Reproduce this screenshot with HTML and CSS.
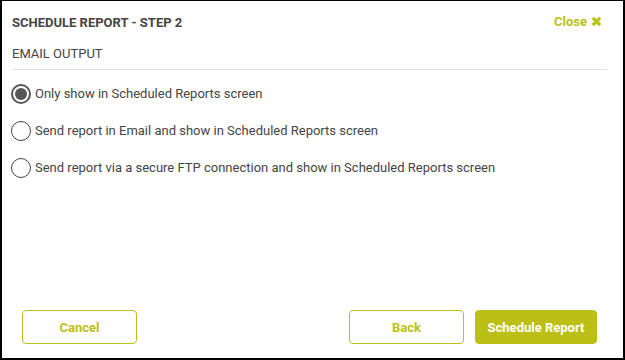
FILE: index.html
```html
<!DOCTYPE html>
<html lang="en">
<head>
<meta charset="UTF-8">
<meta name="viewport" content="width=device-width, initial-scale=1.0">
<title>Schedule Report - Step 2</title>
<link rel="stylesheet" href="styles.css">
</head>
<body>
  <div class="modal">
    <header class="modal-header">
      <h1 class="modal-title">SCHEDULE REPORT - STEP 2</h1>
      <a href="#" class="close-link">Close
        <svg class="close-icon" width="11" height="11" viewBox="0 0 11 11">
          <path d="M1.8 1.8 L9.2 9.2 M9.2 1.8 L1.8 9.2" stroke="currentColor" stroke-width="3.2"/>
        </svg>
      </a>
    </header>

    <div class="section-label">EMAIL OUTPUT</div>
    <div class="divider"></div>

    <ul class="option-list">
      <li class="option">
        <span class="radio checked"></span>
        <span class="option-text">Only show in Scheduled Reports screen</span>
      </li>
      <li class="option">
        <span class="radio"></span>
        <span class="option-text">Send report in Email and show in Scheduled Reports screen</span>
      </li>
      <li class="option">
        <span class="radio"></span>
        <span class="option-text">Send report via a secure FTP connection and show in Scheduled Reports screen</span>
      </li>
    </ul>

    <footer class="modal-footer">
      <button class="btn btn-outline">Cancel</button>
      <div class="footer-right">
        <button class="btn btn-outline">Back</button>
        <button class="btn btn-primary">Schedule Report</button>
      </div>
    </footer>
  </div>
</body>
</html>
```

FILE: styles.css
```css
* {
  margin: 0;
  padding: 0;
  box-sizing: border-box;
}

body {
  font-family: Roboto, 'Liberation Sans', Arial, sans-serif;
  color: #444;
  background-color: #fff;
}

/* Modal frame */
.modal {
  width: 625px;
  height: 360px;
  border: 2px solid #000;
  border-top-width: 1px;
  display: flex;
  flex-direction: column;
  padding: 0 16px 0 10px;
}

.modal-header {
  display: flex;
  justify-content: space-between;
  align-items: center;
  padding: 13px 5px 0 0;
  height: 30px;
}

.modal-title {
  font-size: 13px;
  font-weight: bold;
  line-height: 16px;
  color: #444;
}

.close-link {
  display: flex;
  align-items: center;
  gap: 4px;
  color: #bcc016;
  font-size: 13px;
  font-weight: bold;
  text-decoration: none;
  line-height: 16px;
  margin-top: -2px;
}

.section-label {
  font-size: 13px;
  line-height: 16px;
  margin-top: 15px;
  color: #444;
}

.divider {
  height: 1px;
  background-color: #e2e2e2;
  margin-top: 7px;
  margin-left: 1px;
}

/* Radio options */
.option-list {
  list-style: none;
  padding-top: 5px;
  margin-left: -1px;
}

.option {
  display: flex;
  align-items: center;
  height: 37px;
  gap: 4px;
}

.radio {
  width: 20px;
  height: 20px;
  border-radius: 50%;
  border: 1.5px solid #444;
  display: flex;
  align-items: center;
  justify-content: center;
  flex-shrink: 0;
}

.radio.checked {
  border: 2px solid #555;
}

.radio.checked::after {
  content: '';
  width: 12px;
  height: 12px;
  border-radius: 50%;
  background-color: #555;
}

.option-text {
  font-size: 13px;
  color: #444;
}

/* Footer buttons */
.modal-footer {
  margin-top: auto;
  display: flex;
  justify-content: space-between;
  padding: 0 10px 14px 10px;
}

.footer-right {
  display: flex;
  gap: 11px;
}

.btn {
  height: 34px;
  width: 115px;
  border-radius: 4px;
  font-family: inherit;
  font-size: 13px;
  font-weight: bold;
  cursor: pointer;
}

.btn-outline {
  background-color: #fff;
  border: 1px solid #bcc016;
  color: #bcc016;
}

.btn-primary {
  width: 122px;
  background-color: #bcc016;
  border: 1px solid #bcc016;
  color: #fff;
}
```
